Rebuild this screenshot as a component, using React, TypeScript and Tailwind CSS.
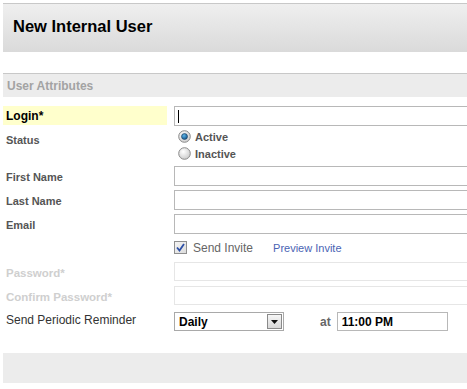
import type { ReactNode } from "react";

const font = { fontFamily: '"Liberation Sans", Arial, sans-serif' };

const Row = ({ label, className = "", labelClass = "", children }: { label?: string; className?: string; labelClass?: string; children: ReactNode }) => (
  <div className={`flex ${className}`}>
    <div className={`w-[164px] shrink-0 pl-[3px] ${labelClass}`}>{label}</div>
    <div className="ml-[7px] flex-1">{children}</div>
  </div>
);

const Radio = ({ checked }: { checked?: boolean }) => (
  <svg width="13" height="13" viewBox="0 0 13 13" className="shrink-0">
    <defs>
      <radialGradient id={checked ? "rg1" : "rg0"} cx="0.4" cy="0.35" r="0.7">
        <stop offset="0" stopColor="#ffffff" />
        <stop offset="1" stopColor="#c9c9c9" />
      </radialGradient>
      <radialGradient id="dot" cx="0.4" cy="0.35" r="0.7">
        <stop offset="0" stopColor="#5fb4e6" />
        <stop offset="1" stopColor="#0b4f86" />
      </radialGradient>
    </defs>
    <circle cx="6.5" cy="6.5" r="5.8" fill={`url(#${checked ? "rg1" : "rg0"})`} stroke="#8a8a8a" strokeWidth="1" />
    {checked && <circle cx="6.5" cy="6.5" r="3" fill="url(#dot)" stroke="#1c3d5e" strokeWidth="0.6" />}
  </svg>
);

export default function App() {
  return (
    <div className="w-full overflow-hidden bg-white text-[12px] leading-[14px]" style={font}>
      <div className="ml-[3px] mt-[3px] h-[49px] w-[600px] border-t border-[#c8c8c8] bg-gradient-to-b from-[#efefef] to-[#dadada] pl-[10px] pt-[12px]">
        <h1 className="text-[16.5px] font-bold leading-[20px] text-black">New Internal User</h1>
      </div>

      <div className="ml-[3px] mt-[21px] h-[24px] w-[600px] border-t border-[#c8c8c8] bg-[#ececec] pl-[4px] pt-[5px] font-bold text-[#a3a3a3]">
        User Attributes
      </div>

      <div className="ml-[3px] mt-[9px] w-[600px]">
        <Row label="Login*" labelClass="bg-[#ffffcc] font-bold text-black pt-[3px] h-[19px]">
          <div className="flex h-[20px] w-[300px] items-center border border-[#b8b8b8] pl-[3px]">
            <span className="h-[13px] w-px bg-black" />
          </div>
        </Row>

        <Row label="Status" className="mt-[2px]" labelClass="pt-[5px] text-[11px] font-bold text-[#555]">
          <div className="flex flex-col pl-[4px] text-[11px] font-bold text-[#555]">
            <label className="flex h-[17px] items-center gap-[4px]">
              <Radio checked /> Active
            </label>
            <label className="flex h-[17px] items-center gap-[4px]">
              <Radio /> Inactive
            </label>
          </div>
        </Row>

        {["First Name", "Last Name", "Email"].map((l) => (
          <Row key={l} label={l} className="mt-[4px]" labelClass="pt-[4px] text-[11px] font-bold text-[#555]">
            <div className="h-[20px] w-[300px] border border-[#b8b8b8]" />
          </Row>
        ))}

        <Row className="mt-[4px]">
          <div className="flex h-[19px] items-center">
            <span className="flex h-[13px] w-[13px] items-center justify-center border border-[#8f8f8f] bg-gradient-to-br from-[#f4f4f4] to-[#dcdcdc]">
              <svg width="9" height="9" viewBox="0 0 9 9">
                <path d="M1 4.5 L3.5 7.5 L8 1" fill="none" stroke="#2c4fa6" strokeWidth="1.8" />
              </svg>
            </span>
            <span className="ml-[6px] text-[#666]">Send Invite</span>
            <a className="ml-[20px] text-[11px] text-[#4a64b4]">Preview Invite</a>
          </div>
        </Row>

        {["Password*", "Confirm Password*"].map((l) => (
          <Row key={l} label={l} className="mt-[5px]" labelClass="pt-[4px] text-[11.5px] font-bold text-[#cfcfcf]">
            <div className="h-[19px] w-[300px] border border-[#e6e6e6]" />
          </Row>
        ))}

        <Row label="Send Periodic Reminder" className="mt-[7px]" labelClass="pt-[1px] text-[#333]">
          <div className="flex items-center">
            <div className="flex h-[19px] w-[110px] items-center border border-[#a9a9a9] pl-[4px] font-bold text-black">
              <span className="flex-1">Daily</span>
              <span className="mr-px flex h-[15px] w-[15px] items-center justify-center border border-[#8a8a8a] bg-gradient-to-b from-[#f6f6f6] to-[#d8d8d8]">
                <svg width="7" height="4" viewBox="0 0 7 4">
                  <path d="M0 0 H7 L3.5 4 Z" fill="#111" />
                </svg>
              </span>
            </div>
            <span className="ml-[36px] font-bold text-[#666]">at</span>
            <div className="ml-[6px] flex h-[19px] w-[111px] items-center border border-[#b8b8b8] pl-[4px] font-bold text-black">
              11:00 PM
            </div>
          </div>
        </Row>
      </div>

      <div className="ml-[3px] mt-[22px] h-[30px] w-[600px] bg-[#ececec]" />
    </div>
  );
}
